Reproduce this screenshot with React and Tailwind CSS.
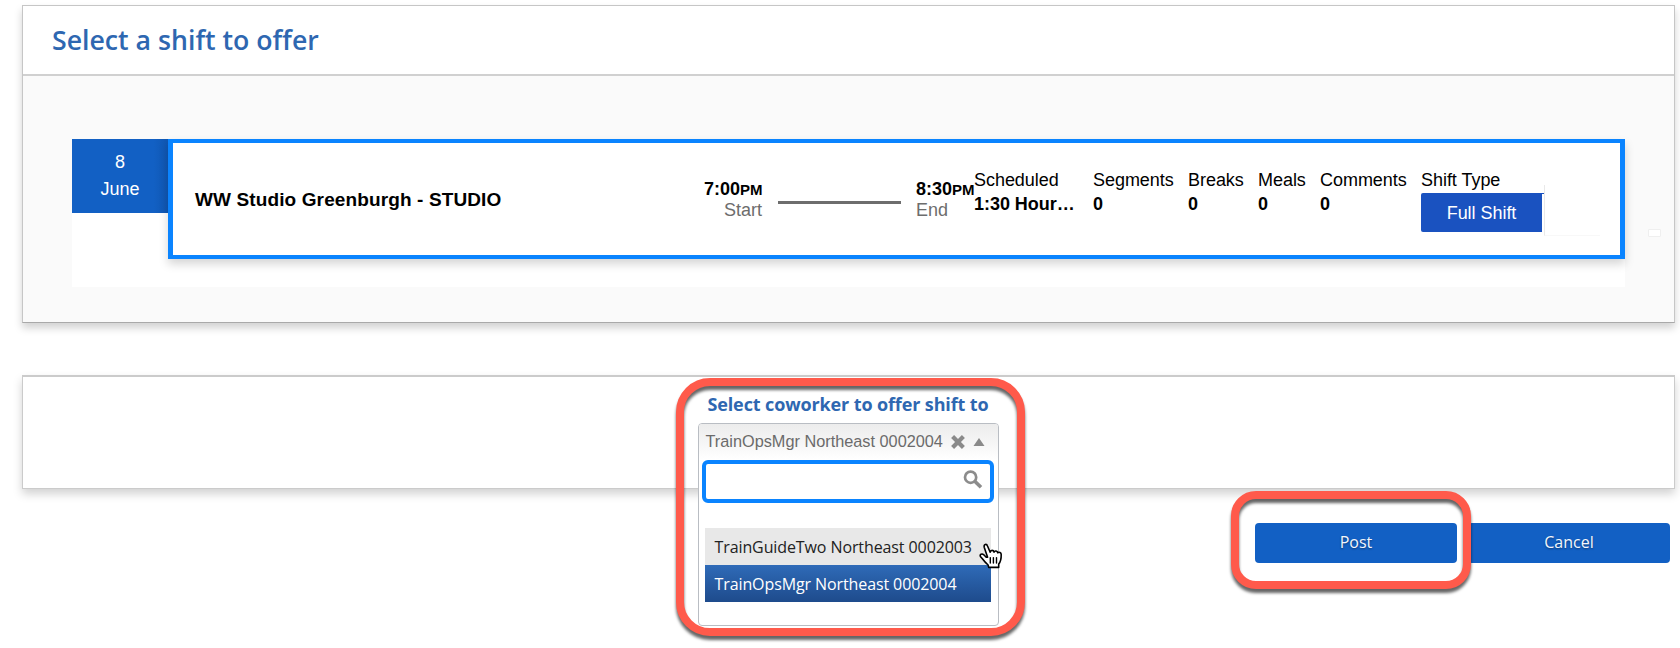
import React from 'react';

const stats = [
  { label: 'Scheduled', value: '1:30 Hour…', cls: 'w-[119px]' },
  { label: 'Segments', value: '0', cls: 'w-[95px]' },
  { label: 'Breaks', value: '0', cls: 'w-[70px]' },
  { label: 'Meals', value: '0', cls: 'w-[62px]' },
  { label: 'Comments', value: '0', cls: 'w-[101px]' },
];

function DateBadge() {
  return (
    <div className="flex h-[74px] w-24 flex-col items-center bg-[#1260c4] bg-linear-to-r from-[#1260c4] from-85% to-[#1057b2] pt-[10px] text-[18px] leading-[27px] text-white">
      <span>8</span>
      <span>June</span>
    </div>
  );
}

function ShiftCard() {
  return (
    <div className="flex h-[120px] w-[1457px] border-x-[5px] border-y-[4px] border-[#0a84ff] bg-white shadow-[0_5px_9px_rgba(0,0,0,0.17)]">
      <div className="w-[531px] pt-[46px] pl-[22px] text-[19px] leading-[21px] font-bold tracking-[0.12px]">
        WW Studio Greenburgh - STUDIO
      </div>
      <div className="w-[58px] pt-[36px] text-right text-[18px] leading-[21px] whitespace-nowrap text-[#6d6d6d]">
        <div className="font-bold text-black">7:00<span className="text-[15px]">PM</span></div>
        <div>Start</div>
      </div>
      <div className="mt-[58px] ml-[16px] h-[3px] w-[123px] bg-[#6d6d6d]" />
      <div className="ml-[15px] w-[58px] pt-[36px] text-[18px] leading-[21px] whitespace-nowrap text-[#6d6d6d]">
        <div className="font-bold text-black">8:30<span className="text-[15px]">PM</span></div>
        <div>End</div>
      </div>
      <div className="flex pt-[25px] text-[18px] leading-[24px] tracking-[-0.04px] whitespace-nowrap">
        {stats.map((s) => (
          <div key={s.label} className={s.cls}>
            <div>{s.label}</div>
            <div className="font-bold">{s.value}</div>
          </div>
        ))}
        <div>
          <div>Shift Type</div>
          <div className="mt-[1px] flex">
            <button className="h-[39px] w-[121px] rounded-l-[2px] bg-[#1a52c0] pt-px text-[18px] text-white">Full Shift</button>
            <span className="h-px w-[2px] bg-[#1a52c0]" />
            <span className="-mt-2 h-[51px] w-[56px] border-b border-l border-b-[#f8f8f8] border-l-[#e9e9e9]" />
          </div>
        </div>
      </div>
    </div>
  );
}

function SearchIcon() {
  return (
    <svg className="h-5 w-5" viewBox="0 0 20 20" fill="none" stroke="#8c8c8c">
      <circle cx="7.6" cy="7.2" r="5.6" strokeWidth="2.7" />
      <path d="M11.8 11.2 18 17.2" strokeWidth="3.6" />
    </svg>
  );
}

function CoworkerSelect() {
  return (
    <div className="flex w-[301px] flex-col items-center">
      <h2 className="h-[46px] shrink-0 pt-[15px] text-[18px] leading-[24px] font-bold tracking-[-0.12px] whitespace-nowrap text-[#2e67b1] [font-family:'Open_Sans',sans-serif]">
        Select coworker to offer shift to
      </h2>
      <div className="flex h-[203px] w-[301px] shrink-0 flex-col rounded-[4px] border-[1.5px] border-[#b9bdc3] bg-white">
        <div className="flex h-[36px] items-center rounded-t-[3px] bg-linear-to-b from-[#ececec] to-white pl-[7px] text-[16.3px] text-[#6b6b6b]">
          <span className="w-[245px] pb-px whitespace-nowrap">TrainOpsMgr Northeast 0002004</span>
          <svg className="h-[14px] w-[14px]" viewBox="0 0 14 14" stroke="#8a8a8a" strokeWidth="4.2">
            <path d="M1.6 1.6 12.4 12.4M12.4 1.6 1.6 12.4" />
          </svg>
          <svg className="ml-[8px] h-[8px] w-[12px]" viewBox="0 0 12 8" fill="#8a8a8a">
            <path d="M6 0 11.5 8H.5Z" />
          </svg>
        </div>
        <div className="ml-[3px] flex h-[43px] w-[292px] justify-end rounded-[6px] border-[4px] border-[#0a84ff] bg-white pt-[6px] pr-[7px]">
          <SearchIcon />
        </div>
        <ul className="mt-[25px] ml-[6px] w-[286px] text-[16px] leading-[38px] tracking-[-0.1px] whitespace-nowrap [font-family:'Open_Sans',sans-serif]">
          <li className="h-[37px] bg-[#e8e8e8] pl-[10px] text-[#222]">TrainGuideTwo Northeast 0002003</li>
          <li className="h-[37px] bg-linear-to-b from-[#2f6bb8] to-[#1e4b8c] pl-[10px] text-white">TrainOpsMgr Northeast 0002004</li>
        </ul>
      </div>
    </div>
  );
}

function HandCursor() {
  return (
    <svg className="absolute top-[543px] left-[979px] h-[26px] w-[24px]" viewBox="0 0 24 26" fill="white" stroke="black" strokeWidth="1.6" strokeLinejoin="round" strokeLinecap="round">
      <path d="M8.6 14.2 5.2 4.2C4.6 1.2 7.6.4 8.5 3L11.2 9.2C11.6 6.7 14.6 6.8 15 9.1 15.8 7.3 18.4 7.7 18.7 9.8 20.1 8.7 22.2 9.6 22.2 11.6 22.3 16 21.6 19 19.7 21.1L19.7 24.4H9.7L9.1 22C6.7 19.9 5 18 3.4 15.8L1.4 13.4C.4 11.3 3 10.2 4.8 11.8L7.2 14.2Z" />
      <path d="M11.3 14.6V20M14.4 14.6V20M17.5 14.6V20" strokeWidth="1.4" />
    </svg>
  );
}

export default function App() {
  return (
    <div className="relative h-[648px] w-[1680px] overflow-hidden bg-white pt-[5px] pl-[22px] text-black [font-family:'Liberation_Sans',Arial,sans-serif]">
      <section className="h-[318px] w-[1653px] border border-[#c6c6c6] border-b-[#a9a9a9] bg-[#fafafa] shadow-[0_5px_8px_rgba(0,0,0,0.18)]">
        <header className="h-[70px] border-b-[2px] border-[#d0d0d0] bg-white pt-[14px] pl-[29px]">
          <h1 className="text-[26.7px] leading-[40px] font-semibold text-[#2e67b1] [font-family:'Open_Sans',sans-serif]">Select a shift to offer</h1>
        </header>
        <div className="flex">
          <div className="mt-[63px] ml-[49px] flex h-[148px] w-[1553px] bg-white">
            <DateBadge />
            <ShiftCard />
          </div>
          <span className="mt-[153px] ml-[23px] h-[8px] w-[13px] rounded-[1px] border border-[#efefef] bg-white" />
        </div>
      </section>

      <section className="mt-[52px] flex h-[114px] w-[1653px] justify-center border border-t-2 border-[#cbcbcb] bg-white pr-px shadow-[0_5px_9px_rgba(0,0,0,0.18)]">
        <CoworkerSelect />
      </section>

      <div className="mt-[34px] ml-[1233px] flex gap-[11px] text-[16px] [font-family:'Open_Sans',sans-serif]">
        <button className="h-[40px] w-[202px] rounded-[4px] bg-[#1260c4] pb-[2px] text-[#f2f6fc] [text-shadow:0_1px_2px_rgba(0,0,0,0.4)]">Post</button>
        <button className="h-[40px] w-[202px] rounded-[4px] bg-[#1260c4] pb-[2px] text-[#f2f6fc] [text-shadow:0_1px_2px_rgba(0,0,0,0.4)]">Cancel</button>
      </div>

      <div className="pointer-events-none absolute top-[378px] left-[676px] h-[258px] w-[349px] rounded-[34px] border-[8px] border-[#ff5a4b] drop-shadow-[0_4px_1.5px_rgba(0,0,0,0.6)]" />
      <div className="pointer-events-none absolute top-[491px] left-[1231px] h-[98px] w-[240px] rounded-[25px] border-[8px] border-[#ff5a4b] drop-shadow-[0_4px_1.5px_rgba(0,0,0,0.6)]" />
      <HandCursor />
    </div>
  );
}
